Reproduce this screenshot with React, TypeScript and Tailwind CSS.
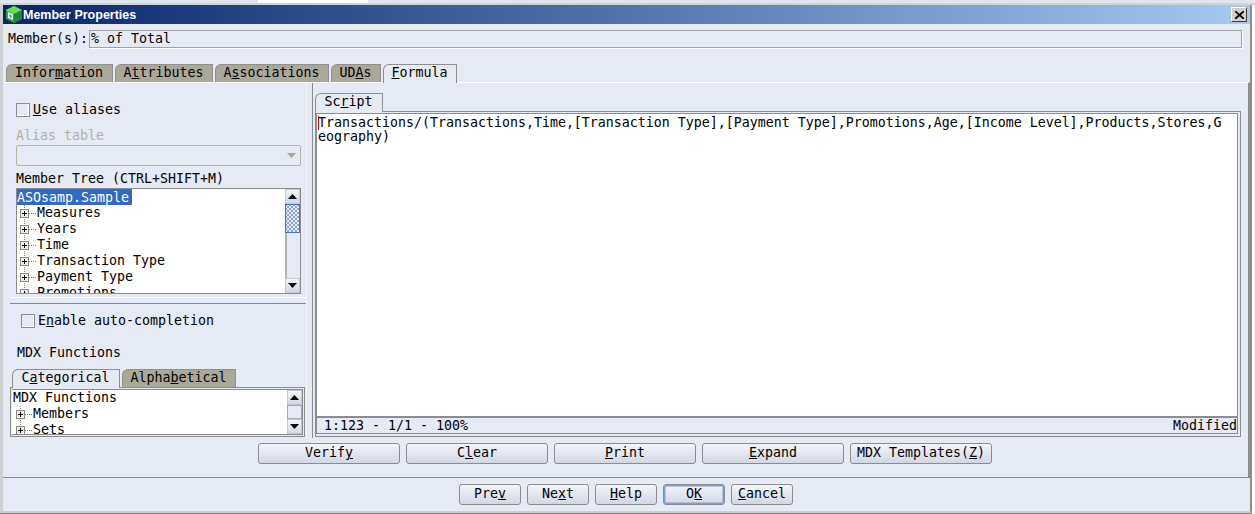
import type { ReactNode } from "react";

function Tab({ active, width, children }: { active?: boolean; width: string; children: ReactNode }) {
  return (
    <div
      className={`${width} flex items-center justify-center pr-px rounded-tl-[6px] border border-b-0 border-[#8f8f8f] ${
        active ? "bg-[#e6eaf5] h-[19px] pb-[2px] -mb-px relative z-10" : "h-[18px] pb-px bg-[#aca899]"
      }`}
    >
      {children}
    </div>
  );
}

function Btn({ width, def, children }: { width: string; def?: boolean; children: ReactNode }) {
  return (
    <div
      className={`${width} h-[21px] pb-px flex items-center justify-center rounded-[3px] border border-[#8c8c8c] bg-gradient-to-b from-[#f3f5fb] to-[#d3d7e4] ${
        def ? "shadow-[inset_0_0_0_1.5px_#7c9fd8]" : ""
      }`}
    >
      {children}
    </div>
  );
}

function ScrollBtn({ down }: { down?: boolean }) {
  return (
    <div className="h-[15px] shrink-0 flex items-center justify-center bg-gradient-to-b from-[#f3f5fb] to-[#d3d7e4] border border-[#c4c8d0]">
      <svg width="9" height="5" viewBox="0 0 9 5">
        <path d={down ? "M0 0h9L4.5 5z" : "M0 5h9L4.5 0z"} fill="#000" />
      </svg>
    </div>
  );
}

function Expander() {
  return (
    <svg width="17" height="16" viewBox="0 0 17 16" className="shrink-0">
      <path d="M4.5 0v16M9 8.5h8" stroke="#808080" strokeDasharray="1 1" fill="none" />
      <rect x="0.5" y="4.5" width="8" height="8" fill="#f0f0ea" stroke="#8a8a80" />
      <path d="M2 8.5h5M4.5 6v5" stroke="#000" />
    </svg>
  );
}

function TreeRow({ label }: { label: string }) {
  return (
    <div className="h-4 flex items-center pl-[3px]">
      <Expander />
      <span>{label}</span>
    </div>
  );
}

const memberRows = ["Measures", "Years", "Time", "Transaction Type", "Payment Type", "Promotions"];

export default function App() {
  return (
    <div className="w-[1255px] h-[514px] overflow-hidden bg-white text-[13.29px] leading-4 text-black font-['DejaVu_Sans_Mono',monospace]">
      {/* strip of the window behind */}
      <div className="h-[3px] flex bg-[#dfe6f2]">
        <div className="w-[258px]" />
        <div className="w-[110px] bg-white" />
      </div>
      <div className="h-[2px] bg-[#d4d2cc]" />

      <div className="w-[1252px] h-[508px] flex flex-col bg-[#e6eaf5] border-l-[3px] border-r-2 border-b-2 border-l-[#cfd0d4] border-r-[#8e8e8e] border-b-[#cfcdc6]">
        {/* title bar */}
        <div className="h-[19px] shrink-0 flex items-center bg-gradient-to-r from-[#0a246a] to-[#a6caf0] pl-[2px] pr-[3px]">
          <svg width="18" height="17" viewBox="0 0 18 17" className="shrink-0">
            <path d="M9 0l8 4v9l-8 4-8-4V4z" fill="#2fa83a" />
            <path d="M9 0l8 4-8 4-8-4z" fill="#6fdc5a" />
            <path d="M9 8l8-4v9l-8 4z" fill="#1d8a2c" />
            <path d="M3 6l5 2v6l-5-2z" fill="#e8f0f0" />
            <path d="M4.5 8l2 1v3l-2-1z" fill="#5a9aa0" />
          </svg>
          <span className="font-['Liberation_Sans',sans-serif] font-bold text-[12.5px] text-white">Member Properties</span>
          <div className="ml-auto w-[16px] h-[15px] flex items-center justify-center bg-[#d4d0c8] border border-t-white border-l-white border-r-[#404040] border-b-[#404040]">
            <svg width="9" height="8" viewBox="0 0 9 8">
              <path d="M0 0l9 8M9 0L0 8" stroke="#000" strokeWidth="1.8" />
            </svg>
          </div>
        </div>

        {/* member field */}
        <div className="h-[24px] shrink-0 flex items-center pl-[5px] pr-[8px] pt-[6px]">
          <span className="w-[81px] shrink-0">Member(s):</span>
          <div className="flex-1 h-[18px] pl-px flex items-center border border-[#a0a0a8] shadow-[1px_1px_0_#fff]">% of Total</div>
        </div>

        {/* main tabs */}
        <div className="mt-[16px] shrink-0 flex gap-[2px] pl-[3px] h-[18px] relative z-10">
          <Tab width="w-[107px]">
            <span>Infor<u>m</u>ation</span>
          </Tab>
          <Tab width="w-[98px]">
            <span>A<u>t</u>tributes</span>
          </Tab>
          <Tab width="w-[114px]">
            <span>A<u>s</u>sociations</span>
          </Tab>
          <Tab width="w-[50px]">
            <span>UD<u>A</u>s</span>
          </Tab>
          <Tab active width="w-[74px]">
            <span><u>F</u>ormula</span>
          </Tab>
        </div>

        {/* tab page */}
        <div className="h-[356px] shrink-0 flex border-t border-white ml-px border-r-2 border-r-[#8c8c8c]">
          {/* left column */}
          <div className="w-[303px] shrink-0 flex flex-col pl-[1px] border-r border-[#f4f6fb]">
            <div className="h-[14px] mt-[20px] ml-[11px] flex items-center gap-[3px] shrink-0">
              <div className="w-[14px] h-[14px] bg-[#e6eaf5] border border-[#8c8c8c] shadow-[inset_-1px_-1px_0_#fff]" />
              <span><u>U</u>se aliases</span>
            </div>
            <div className="ml-[11px] mt-[11px] text-[#b0b0a4] shrink-0">Alias table</div>
            <div className="ml-[11px] mt-px w-[285px] h-[21px] shrink-0 rounded-[2px] border border-[#b4b4a8] flex items-center justify-end pr-[4px]">
              <svg width="9" height="5" viewBox="0 0 9 5">
                <path d="M0 0h9L4.5 5z" fill="#a8a89c" />
              </svg>
            </div>
            <div className="ml-[11px] mt-[5px] shrink-0">Member Tree (CTRL+SHIFT+M)</div>
            <div className="ml-[11px] mt-px w-[285px] h-[106px] shrink-0 flex border border-[#8c8c8c] bg-white overflow-hidden">
              <div className="flex-1 overflow-hidden">
                <div className="w-[115px] h-4 leading-[18px] bg-[#316ac5] text-white">ASOsamp.Sample</div>
                {memberRows.map((row) => (
                  <TreeRow key={row} label={row} />
                ))}
              </div>
              <div className="w-[15px] shrink-0 flex flex-col bg-[#e6eaf5]">
                <ScrollBtn />
                <div className="h-[29px] shrink-0 border border-[#3a78d0] bg-[radial-gradient(#8aa4d6_0.8px,transparent_0.8px),radial-gradient(#8aa4d6_0.8px,transparent_0.8px)] bg-[length:4px_4px] bg-[position:0_0,2px_2px]" />
                <div className="flex-1 border-l-2 border-[#b4b4a8]" />
                <ScrollBtn down />
              </div>
            </div>
            <div className="mt-[3px] ml-[5px] shrink-0 border-t border-white" />
            <div className="mt-[5px] ml-[5px] shrink-0 border-t border-[#8c8c8c]" />
            <div className="h-[14px] mt-[10px] ml-[16px] flex items-center gap-[3px] shrink-0">
              <div className="w-[14px] h-[14px] bg-[#e6eaf5] border border-[#8c8c8c] shadow-[inset_-1px_-1px_0_#fff]" />
              <span>E<u>n</u>able auto-completion</span>
            </div>
            <div className="ml-[12px] mt-[17px] shrink-0">MDX Functions</div>
            <div className="mt-[8px] ml-[7px] flex gap-[2px] h-[18px] shrink-0 relative z-10">
              <Tab active width="w-[108px]">
                <span>C<u>a</u>tegorical</span>
              </Tab>
              <Tab width="w-[114px]">
                <span>Alpha<u>b</u>etical</span>
              </Tab>
            </div>
            <div className="ml-[5px] w-[295px] h-[50px] shrink-0 border border-[#8c8c8c] p-px flex">
              <div className="flex-1 flex border border-l-0 border-[#8c8c8c] bg-white overflow-hidden">
                <div className="flex-1 overflow-hidden pl-px">
                  <div className="h-4 leading-[15px]">MDX Functions</div>
                  <TreeRow label="Members" />
                  <TreeRow label="Sets" />
                </div>
                <div className="w-[15px] shrink-0 flex flex-col bg-[#e6eaf5]">
                  <ScrollBtn />
                  <div className="flex-1 border border-[#a8a8a8]" />
                  <ScrollBtn down />
                </div>
              </div>
            </div>
          </div>

          {/* right column */}
          <div className="flex-1 min-w-0 flex flex-col ml-[5px] pl-[2px] pr-[7px] border-l border-[#8c8c8c]">
            <div className="mt-[10px] flex h-[18px] relative z-10 shrink-0">
              <Tab active width="w-[68px]">
                <span>Sc<u>r</u>ipt</span>
              </Tab>
            </div>
            <div className="h-[326px] shrink-0 flex flex-col border border-[#8c8c8c] pt-px pr-[2px] pb-[2px]">
              <div className="flex-1 min-h-0 flex flex-col border border-[#8c8c8c]">
                <div className="flex-1 min-h-0 bg-white border-b-2 border-[#8c8c8c] pl-px pt-[2px] leading-[14px]">
                  <div className="flex">
                    <span className="w-0 h-[14px] border-l border-red-600 -mr-px" />
                    <span>Transactions/(Transactions,Time,[Transaction Type],[Payment Type],Promotions,Age,[Income Level],Products,Stores,G</span>
                  </div>
                  <div>eography)</div>
                </div>
                <div className="h-[15px] shrink-0 flex items-center justify-between pl-[7px]">
                  <span>1:123 - 1/1 - 100%</span>
                  <span>Modified</span>
                </div>
              </div>
            </div>
          </div>
        </div>

        {/* action buttons */}
        <div className="h-[40px] shrink-0 flex items-start pt-[5px] pl-[255px] gap-[6px] border-b border-r-2 border-[#8c8c8c]">
          <Btn width="w-[142px]">
            <span>Verif<u>y</u></span>
          </Btn>
          <Btn width="w-[142px]">
            <span>C<u>l</u>ear</span>
          </Btn>
          <Btn width="w-[142px]">
            <span><u>P</u>rint</span>
          </Btn>
          <Btn width="w-[142px]">
            <span><u>E</u>xpand</span>
          </Btn>
          <Btn width="w-[142px]">
            <span>MDX Templates(<u>Z</u>)</span>
          </Btn>
        </div>

        {/* dialog buttons */}
        <div className="flex-1 flex items-start pt-[6px] pl-[456px] gap-[6px]">
          <Btn width="w-[62px]">
            <span>Pre<u>v</u></span>
          </Btn>
          <Btn width="w-[62px]">
            <span>Ne<u>x</u>t</span>
          </Btn>
          <Btn width="w-[62px]">
            <span><u>H</u>elp</span>
          </Btn>
          <Btn def width="w-[62px]">
            <span>O<u>K</u></span>
          </Btn>
          <Btn width="w-[62px]">
            <span><u>C</u>ancel</span>
          </Btn>
        </div>
      </div>
      <div className="w-[1252px] h-px bg-[#808080]" />
    </div>
  );
}
